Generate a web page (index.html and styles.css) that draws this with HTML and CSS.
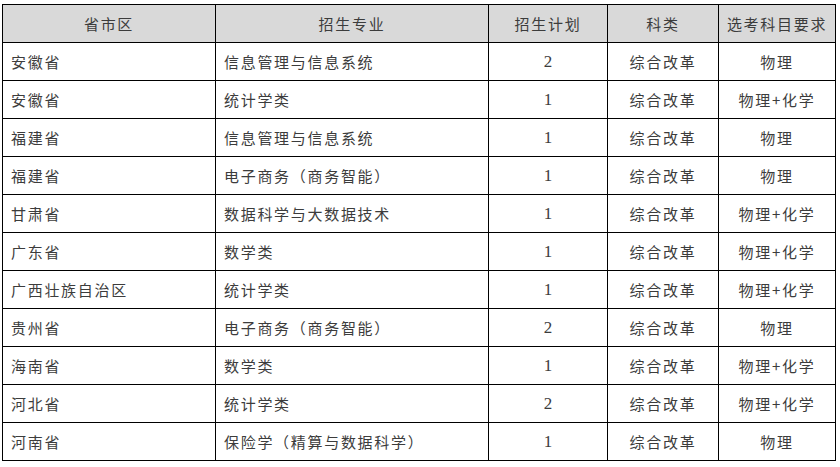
FILE: index.html
```html
<!DOCTYPE html>
<html lang="zh">
<head>
<meta charset="utf-8">
<link rel="stylesheet" href="styles.css">
</head>
<body>
<table class="grid">
  <colgroup>
    <col class="c1"><col class="c2"><col class="c3"><col class="c4"><col class="c5">
  </colgroup>
  <thead>
    <tr><th>省市区</th><th>招生专业</th><th>招生计划</th><th>科类</th><th>选考科目要求</th></tr>
  </thead>
  <tbody>
    <tr><td class="l">安徽省</td><td class="l">信息管理与信息系统</td><td class="n">2</td><td>综合改革</td><td>物理</td></tr>
    <tr><td class="l">安徽省</td><td class="l">统计学类</td><td class="n">1</td><td>综合改革</td><td>物理+化学</td></tr>
    <tr><td class="l">福建省</td><td class="l">信息管理与信息系统</td><td class="n">1</td><td>综合改革</td><td>物理</td></tr>
    <tr><td class="l">福建省</td><td class="l">电子商务（商务智能）</td><td class="n">1</td><td>综合改革</td><td>物理</td></tr>
    <tr><td class="l">甘肃省</td><td class="l">数据科学与大数据技术</td><td class="n">1</td><td>综合改革</td><td>物理+化学</td></tr>
    <tr><td class="l">广东省</td><td class="l">数学类</td><td class="n">1</td><td>综合改革</td><td>物理+化学</td></tr>
    <tr><td class="l">广西壮族自治区</td><td class="l">统计学类</td><td class="n">1</td><td>综合改革</td><td>物理+化学</td></tr>
    <tr><td class="l">贵州省</td><td class="l">电子商务（商务智能）</td><td class="n">2</td><td>综合改革</td><td>物理</td></tr>
    <tr><td class="l">海南省</td><td class="l">数学类</td><td class="n">1</td><td>综合改革</td><td>物理+化学</td></tr>
    <tr><td class="l">河北省</td><td class="l">统计学类</td><td class="n">2</td><td>综合改革</td><td>物理+化学</td></tr>
    <tr><td class="l">河南省</td><td class="l">保险学（精算与数据科学）</td><td class="n">1</td><td>综合改革</td><td>物理</td></tr>
  </tbody>
</table>
</body>
</html>
```
FILE: styles.css
```css
html, body {
  margin: 0;
  padding: 0;
  background: #ffffff;
}
body {
  padding: 4px 0 0 2px;
  font-family: "Noto Sans CJK SC", "Noto Sans", sans-serif;
  color: #3c3c3c;
}
.grid {
  border-collapse: separate;
  border-spacing: 1px;
  background: #000000;
  table-layout: fixed;
  width: 834px;
}
.c1 { width: 212px; }
.c2 { width: 272px; }
.c3 { width: 118px; }
.c4 { width: 110px; }
.c5 { width: 116px; }
.grid th, .grid td {
  height: 37px;
  padding: 0;
  box-sizing: border-box;
  background: #ffffff;
  font-size: 15px;
  font-weight: 400;
  letter-spacing: 1.7px;
  text-align: center;
  vertical-align: middle;
  white-space: nowrap;
  line-height: 20px;
}
.grid th {
  background: #d9d9d9;
}
.grid td.l {
  text-align: left;
  padding-left: 8px;
}
.grid td.n {
  font-family: "Liberation Serif", serif;
  font-size: 17px;
  letter-spacing: 0;
}
```
